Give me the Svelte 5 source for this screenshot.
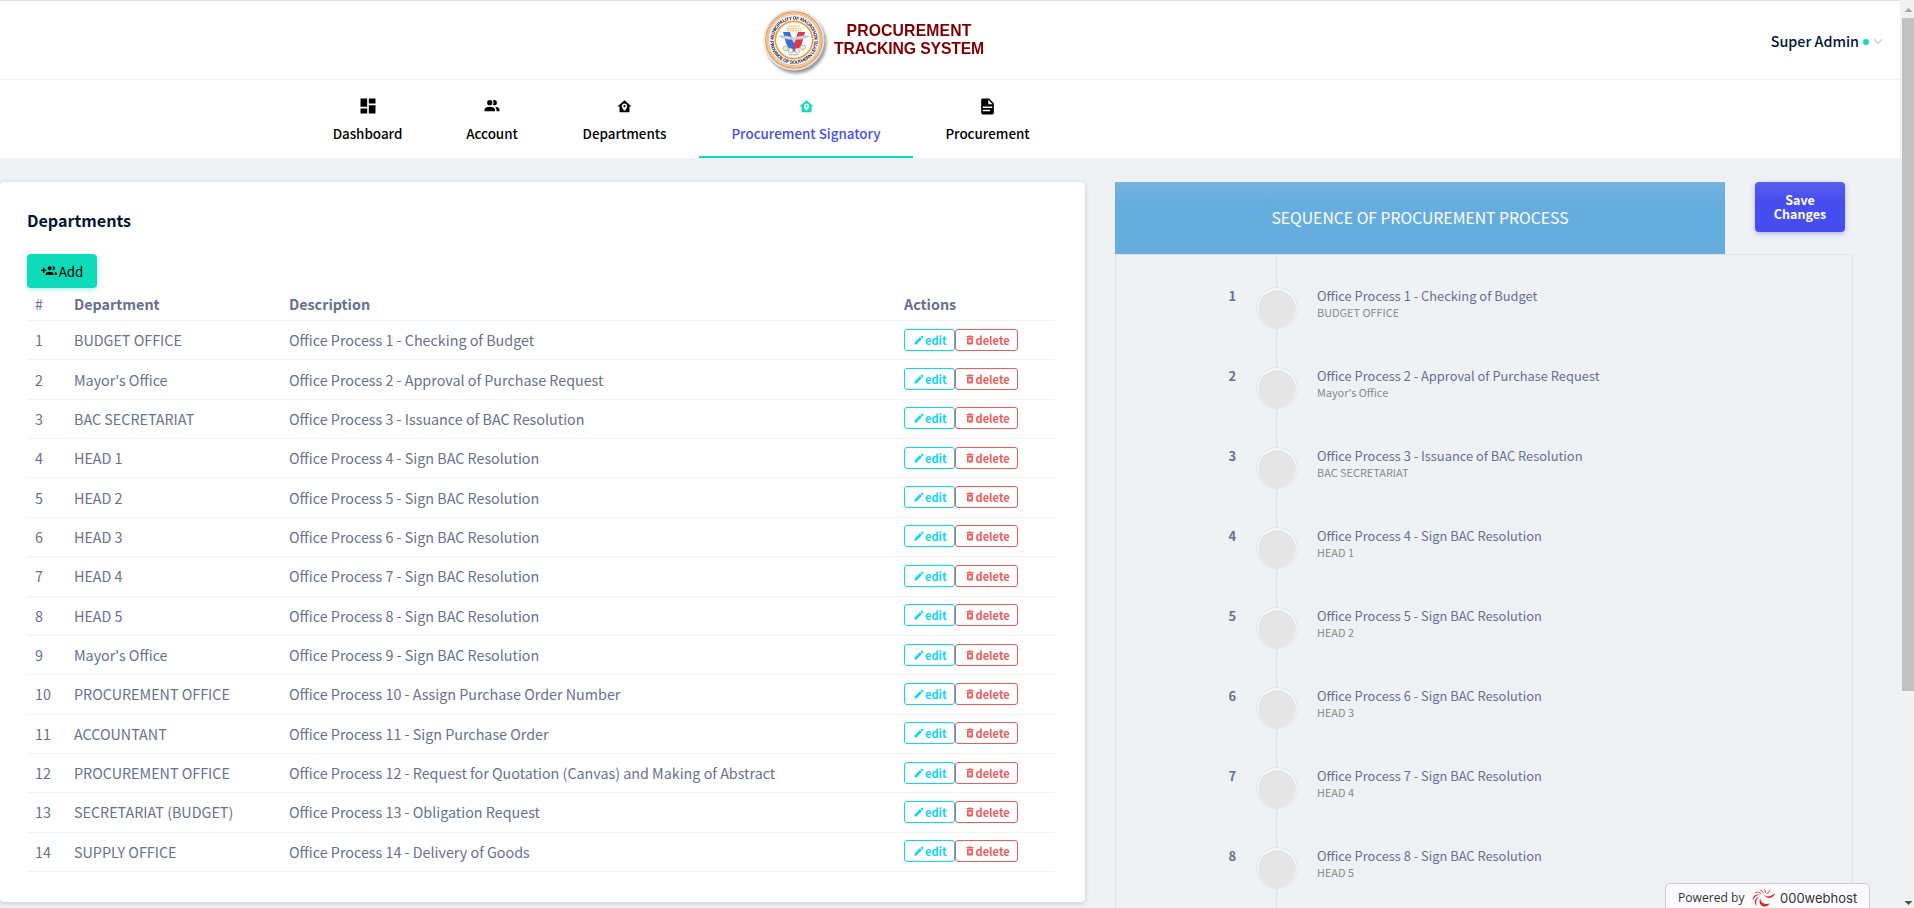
<script>
  const icons = {
    dashboard: 'M13,3V9H21V3M13,21H21V11H13M3,21H11V15H3M3,13H11V3H3V13Z',
    accounts: 'M16 17V19H2V17S2 13 9 13 16 17 16 17M12.5 7.5A3.5 3.5 0 1 0 9 11A3.5 3.5 0 0 0 12.5 7.5M15.94 13A5.32 5.32 0 0 1 18 17V19H22V17S22 13.37 15.94 13M15 4A3.39 3.39 0 0 0 13.07 4.59A5 5 0 0 1 13.07 10.41A3.39 3.39 0 0 0 15 11A3.5 3.5 0 0 0 15 4Z',
    home: 'M12,3L2,12H5V20H19V12H22L12,3M12,7.7C14.1,7.7 15.8,9.4 15.8,11.5C15.8,14.5 12,18 12,18C12,18 8.2,14.5 8.2,11.5C8.2,9.4 9.9,7.7 12,7.7M12,10A1.5,1.5 0 0,0 10.5,11.5A1.5,1.5 0 0,0 12,13A1.5,1.5 0 0,0 13.5,11.5A1.5,1.5 0 0,0 12,10Z',
    file: 'M13,9H18.5L13,3.5V9M6,2H14L20,8V20A2,2 0 0,1 18,22H6C4.89,22 4,21.1 4,20V4C4,2.89 4.89,2 6,2M15,18V16H6V18H15M18,14V12H6V14H18Z',
    add: 'M13 13C11 13 7 14 7 16V18H19V16C19 14 15 13 13 13M19.62 13.16C20.45 13.88 21 14.82 21 16V18H24V16C24 14.46 21.63 13.5 19.62 13.16M13 11A3 3 0 1 0 10 8A3 3 0 0 0 13 11M18 11A3 3 0 1 0 18 5A3.1 3.1 0 0 0 17.09 5.14A5 5 0 0 1 17.09 10.86A3.1 3.1 0 0 0 18 11M8 10H5V7H3V10H0V12H3V15H5V12H8Z',
    pencil: 'M20.71,7.04C21.1,6.65 21.1,6 20.71,5.63L18.37,3.29C18,2.9 17.35,2.9 16.96,3.29L15.12,5.12L18.87,8.87M3,17.25V21H6.75L17.81,9.93L14.06,6.18L3,17.25Z',
    trash: 'M6,19A2,2 0 0,0 8,21H16A2,2 0 0,0 18,19V7H6V19M8.46,11.88L9.87,10.47L12,12.59L14.12,10.47L15.53,11.88L13.41,14L15.53,16.12L14.12,17.53L12,15.41L9.88,17.53L8.47,16.12L10.59,14L8.46,11.88M15.5,4L14.5,3H9.5L8.5,4H5V6H19V4H15.5Z'
  };

  const nav = [
    { label: 'Dashboard', icon: icons.dashboard, size: 20, width: 133 },
    { label: 'Account', icon: icons.accounts, size: 18, width: 116 },
    { label: 'Departments', icon: icons.home, size: 17, width: 149 },
    { label: 'Procurement Signatory', icon: icons.home, size: 17, width: 214, active: true },
    { label: 'Procurement', icon: icons.file, size: 19, width: 149 }
  ];

  const rows = [
    ['BUDGET OFFICE', 'Checking of Budget'],
    ["Mayor's Office", 'Approval of Purchase Request'],
    ['BAC SECRETARIAT', 'Issuance of BAC Resolution'],
    ['HEAD 1', 'Sign BAC Resolution'],
    ['HEAD 2', 'Sign BAC Resolution'],
    ['HEAD 3', 'Sign BAC Resolution'],
    ['HEAD 4', 'Sign BAC Resolution'],
    ['HEAD 5', 'Sign BAC Resolution'],
    ["Mayor's Office", 'Sign BAC Resolution'],
    ['PROCUREMENT OFFICE', 'Assign Purchase Order Number'],
    ['ACCOUNTANT', 'Sign Purchase Order'],
    ['PROCUREMENT OFFICE', 'Request for Quotation (Canvas) and Making of Abstract'],
    ['SECRETARIAT (BUDGET)', 'Obligation Request'],
    ['SUPPLY OFFICE', 'Delivery of Goods']
  ].map(([office, task], i) => ({ n: i + 1, office, text: `Office Process ${i + 1} - ${task}` }));
</script>

{#snippet icon(d, size)}
  <svg width={size} height={size} viewBox="0 0 24 24" fill="currentColor"><path {d} /></svg>
{/snippet}

<div class="page">
  <div class="content">
    <header class="top">
      <span></span>
      <div class="brand">
        <svg class="seal" width="66" height="66" viewBox="-33 -33 66 66">
          <defs>
            <path id="arcTop" d="M-20.4,0A20.4,20.4 0 0 1 20.4,0" />
            <path id="arcBottom" d="M-23.8,0A23.8,23.8 0 0 0 23.8,0" />
          </defs>
          <circle r="30" fill="#f7f7f7" stroke="#dcdfe2" stroke-width="1" />
          <circle r="28.2" fill="none" stroke="#e8836a" stroke-width="1.2" />
          <circle r="26.9" fill="#fff" stroke="#f3c94f" stroke-width="1.5" />
          <circle r="25.7" fill="#f3f0f4" stroke="#c79ac0" stroke-width=".7" />
          <text class="arc"><textPath href="#arcTop" startOffset="50%" text-anchor="middle" textLength="63">MUNICIPALITY OF MACROHON</textPath></text>
          <text class="arc"><textPath href="#arcBottom" startOffset="50%" text-anchor="middle" textLength="72">PROVINCE OF SOUTHERN LEYTE</textPath></text>
          <circle r="18.6" fill="#fff" stroke="#f5923a" stroke-width="1.5" />
          <path d="M-11,-8H-4L0,2V12Q-7,8 -8,3Z" fill="#3a6ed0" />
          <path d="M11,-8H4L0,2V12Q7,8 8,3Z" fill="#dc3a50" />
          <path d="M-4,-8H4L0,3Z" fill="#fff" />
          <path d="M-7,-11.5H7M-6,-14H6M-7,-9.4H7" stroke="#f6cc85" stroke-width="1.6" stroke-dasharray="2 .6" />
          <path d="M-15,-4Q-6,-5 0,-2Q6,-5 15,-4Q9,0 2,-.5L0,3L-2,-.5Q-9,0 -15,-4Z" fill="#d5dadd" stroke="#a3abb1" stroke-width=".5" />
          <circle cx="-8.5" cy="8.5" r="2.5" fill="#e6edda" stroke="#8fa37c" stroke-width=".6" />
          <circle cx="-3.4" cy="10.6" r="2.5" fill="#f3f3e4" stroke="#7e9a70" stroke-width=".6" />
          <circle cx="3.4" cy="10.6" r="2.5" fill="#f3f3ee" stroke="#999" stroke-width=".6" />
          <circle cx="9" cy="7.5" r="2.5" fill="#eaf0d8" stroke="#8a9a78" stroke-width=".6" />
          <path d="M-5,14.800H5" stroke="#777" stroke-width=".9" stroke-dasharray="1.200 .5" />
        </svg>
        <div class="name"><span class="l1">PROCUREMENT</span><span class="l2">TRACKING SYSTEM</span></div>
      </div>
      <div class="user">
        <span>Super Admin</span><i class="dot"></i>
        <svg width="10" height="7" viewBox="0 0 10 7" fill="none" stroke="#d4d7dd" stroke-width="1.8"><path d="M.8 1L5 5.4L9.2 1" /></svg>
      </div>
    </header>

    <nav>
      {#each nav as item}
        <a class:active={item.active} style="width:{item.width}px">
          <span class="ico">{@render icon(item.icon, item.size)}</span>
          <span class="label">{item.label}</span>
        </a>
      {/each}
    </nav>

    <main>
      <section class="card">
        <h4>Departments</h4>
        <button class="add">{@render icon(icons.add, 16)}<span>Add</span></button>
        <div class="row head"><span class="hash">#</span><b>Department</b><b>Description</b><b>Actions</b></div>
        {#each rows as r}
          <div class="row">
            <span class="num">{r.n}</span>
            <span>{r.office}</span>
            <span>{r.text}</span>
            <span class="acts">
              <button class="edit">{@render icon(icons.pencil, 12)}<span>edit</span></button>
              <button class="del">{@render icon(icons.trash, 12)}<span>delete</span></button>
            </span>
          </div>
        {/each}
      </section>

      <section class="seq">
        <div class="bar">
          <div class="title"><span>SEQUENCE OF PROCUREMENT PROCESS</span></div>
          <button class="save"><span>Save</span><span>Changes</span></button>
        </div>
        <div class="timeline">
          {#each rows.slice(0, 8) as r}
            <div class="step">
              <b>{r.n}</b>
              <div class="rail"><i></i></div>
              <div class="info"><span>{r.text}</span><small>{r.office}</small></div>
            </div>
          {/each}
          <div class="step"><span></span><div class="rail"></div></div>
        </div>
      </section>
    </main>
  </div>

  <aside class="scroll">
    <svg width="17" height="18" viewBox="0 0 17 18"><path d="M4.5 12L8.5 8L12.5 12Z" fill="#a3a3a3" /></svg>
    <div class="thumb"></div>
    <svg width="17" height="17" viewBox="0 0 17 17"><path d="M4.5 10L8.5 14L12.5 10Z" fill="#505050" /></svg>
  </aside>

  <div class="host">
    <span class="pw">Powered by</span>
    <svg width="24" height="20" viewBox="0 0 24 20">
      <g fill="#d8251c">
        <path d="M8.200 10C8.500 14.500 12 17.200 17.800 15.600C15.500 19.400 9.500 19.800 8 15.500C7.400 13.600 7.500 11.500 8.200 10Z" />
        <path d="M12.200 7C14.500 9.300 19 8.800 23.200 5C22 9.500 15.500 12.500 12.200 7Z" />
        <path d="M7.500 8.500C4.500 10.500 3.600 13.500 4.400 17.800C1.600 14.500 2.800 9.800 7.500 8.500Z" />
        <path d="M8 6.800C4.500 7 2 9 .8 12.800C.2 8.800 3.500 5.600 8 6.800Z" />
      </g>
      <path d="M9.500 5.800C7.500 3.800 5 3.600 2.500 5.200M11.500 5.200C11 3.500 9.500 2.300 7.800 2.200M13.300 5.200C13.800 3.600 13.300 2 12.200 1.200M14.600 5.600C16.500 5 17.600 3.600 17.800 1.800" fill="none" stroke="#e0564f" stroke-width="1" />
    </svg>
    <span class="wh">000webhost</span>
  </div>
</div>

<style>
  :global(body) { margin: 0; overflow: hidden; }
  .page {
    position: relative; display: flex; width: 1914px; height: 908px; overflow: hidden;
    background: #eef2f5; color: #686f91; box-sizing: border-box;
    font-family: "Noto Sans CJK SC", "Open Sans", sans-serif; font-size: 14.32px;
  }
  .page * { box-sizing: border-box; }
  svg { display: block; flex: none; }
  button { font-family: inherit; padding: 0; margin: 0; }
  .content { width: 1900px; flex: none; display: flex; flex-direction: column; }

  .top {
    height: 80px; flex: none; background: #fff; border-top: 1px solid #e0e0e0; border-bottom: 1px solid #f0f3f5;
    display: grid; grid-template-columns: 761px 1fr auto; align-items: center;
  }
  .brand { display: flex; align-items: center; }
  .seal { filter: drop-shadow(2px 3px 1.5px rgba(0, 0, 0, .4)); margin-bottom: 1px; }
  .arc { font: bold 4.6px "Liberation Sans", sans-serif; fill: #222; }
  .name {
    display: flex; flex-direction: column; align-items: center; width: 152px; margin-left: 6px; margin-top: -2px;
    font: bold 16.5px/18px "Liberation Sans", sans-serif; color: #800000; white-space: nowrap; transform: scaleX(.955);
  }
  .l1 { letter-spacing: .15px; }
  .l2 { letter-spacing: -.15px; }
  .user { display: flex; align-items: center; padding-right: 17px; color: #001737; font-weight: 500; font-size: 14.32px; }
  .dot { width: 6px; height: 6px; border-radius: 50%; background: #0ddbb9; margin: 3px 4px 0 4px; }
  .user svg { margin-top: 2px; }

  nav { height: 78px; flex: none; background: #fff; display: flex; padding-left: 301px; }
  nav a {
    display: flex; flex-direction: column; align-items: center; color: #000; font-weight: 500; font-size: 13.4px;
    padding-top: 16px; border-bottom: 2px solid transparent; white-space: nowrap;
  }
  .ico { height: 20px; display: flex; align-items: center; }
  .label { line-height: 20px; margin-top: 7px; }
  nav a.active { border-color: #0ddbb9; color: #464dee; }
  nav a.active .ico { color: #0ddbb9; }

  main { display: flex; padding-top: 24px; align-items: flex-start; }
  .card {
    width: 1085px; height: 720px; background: #fff; border-radius: 4px; padding: 26px 30px 0 27px;
    box-shadow: 0 1px 5px rgba(0, 0, 0, .18);
  }
  h4 { margin: 0; font-size: 16.1px; line-height: 24px; color: #001737; font-weight: 700; }
  .add {
    margin-top: 22px; width: 70px; height: 34px; display: flex; align-items: center; justify-content: center; gap: 2px;
    border: 0; border-radius: 4px; background: #0ddbb9; color: #000; font-size: 13.4px; box-shadow: 0 2px 4px rgba(13, 219, 185, .3);
  }
  .row {
    display: grid; grid-template-columns: 39px 215px 615px 1fr; align-items: center; height: 39.36px;
    padding-left: 8px; border-bottom: 1px solid #eef3f6; line-height: 20px; white-space: nowrap;
  }
  .row.head { height: 33px; }
  .acts { display: flex; margin-top: -1px; }
  .acts button {
    height: 22px; display: flex; align-items: center; background: #fff; border-radius: 3px; border: 1px solid;
    font-weight: 700; font-size: 11.1px; line-height: 18px;
  }
  .acts .edit { width: 51px; color: #0ad7f7; padding-left: 8px; }
  .acts .del { width: 63px; color: #ef5b5b; padding-left: 7.5px; }

  .seq { margin-left: 30px; width: 738px; }
  .bar { display: flex; justify-content: space-between; align-items: flex-start; padding-right: 8px; height: 72px; }
  .title {
    width: 610px; height: 72px; display: flex; align-items: center; justify-content: center; color: #fff; font-size: 15.75px;
    padding-bottom: 2px; background: linear-gradient(#75b4e0, #66addf 20px);
  }
  .save {
    width: 90px; height: 50px; border: 0; border-radius: 4px; color: #fff; font-weight: 700; font-size: 12.5px; line-height: 14px;
    display: flex; flex-direction: column; align-items: center; justify-content: center;
    background: linear-gradient(#5a5ff0, #464dee 20px); box-shadow: 0 2px 5px rgba(70, 77, 238, .35);
  }
  .timeline { border: 1px solid #e3e4e6; height: 660px; overflow: hidden; }
  .step { display: grid; grid-template-columns: 140px 42px 1fr; height: 80px; }
  .step b { padding: 31px 20px 0 0; text-align: right; font-size: 12.9px; line-height: 20px; }
  .rail { display: flex; justify-content: center; align-items: center; padding-top: 26px; background: linear-gradient(90deg, transparent 20px, #e3e4e6 20px, #e3e4e6 21px, transparent 21px); }
  .rail i { width: 42px; height: 42px; flex: none; border-radius: 50%; background: #e5e5e5; border: 1px solid #e5e6e8; box-shadow: inset 0 1px 0 1px #fafafa; margin-left: -1px; }
  .info { padding: 32px 0 0 19px; display: flex; flex-direction: column; white-space: nowrap; font-size: 12.87px; line-height: 18px; }
  .info small { font-size: 10.9px; line-height: 15px; color: #888; }

  .scroll { position: relative; width: 17px; flex: none; background: #f1f1f1; display: flex; flex-direction: column; }
  .thumb { height: 673px; width: 13px; margin: 0 2px auto; background: #c1c1c1; }

  .host {
    position: absolute; left: 1665px; top: 883px; width: 205px; height: 34px; display: flex; align-items: flex-start;
    padding: 4px 0 0 12px; background: rgba(252, 252, 254, .9); border: 1px solid #ccc; border-radius: 5px; color: #333;
  }
  .pw { font: 12.1px/20px "Open Sans", sans-serif; width: 74px; white-space: nowrap; }
  .wh { font: 13px/20px Inter, sans-serif; margin-left: 4px; }
</style>
